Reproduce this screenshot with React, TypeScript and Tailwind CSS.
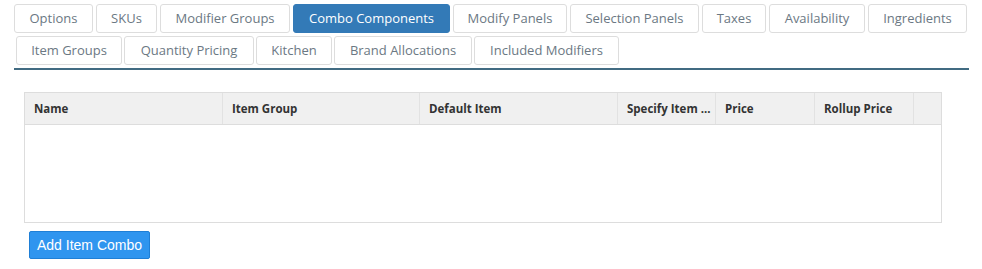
import React from 'react'

const row1 = [
  { label: 'Options', w: 'w-[79px]' },
  { label: 'SKUs', w: 'w-[61px]' },
  { label: 'Modifier Groups', w: 'w-[130px]' },
  { label: 'Combo Components', w: 'w-[157px]', active: true },
  { label: 'Modify Panels', w: 'w-[114px]' },
  { label: 'Selection Panels', w: 'w-[129px]' },
  { label: 'Taxes', w: 'w-[64px]' },
  { label: 'Availability', w: 'w-[96px]' },
  { label: 'Ingredients', w: 'w-[99px]' },
]

const row2 = [
  { label: 'Item Groups', w: 'w-[106px]' },
  { label: 'Quantity Pricing', w: 'w-[130px]' },
  { label: 'Kitchen', w: 'w-[76px]' },
  { label: 'Brand Allocations', w: 'w-[138px]' },
  { label: 'Included Modifiers', w: 'w-[145px]' },
]

const columns = [
  { label: 'Name', w: 'w-[198px]' },
  { label: 'Item Group', w: 'w-[197px]' },
  { label: 'Default Item', w: 'w-[198px]' },
  { label: 'Specify Item ...', w: 'w-[98px]' },
  { label: 'Price', w: 'w-[99px]' },
  { label: 'Rollup Price', w: 'w-[99px]' },
]

type Tab = { label: string; w: string; active?: boolean }

function TabButton({ tab }: { tab: Tab }) {
  return (
    <div
      className={`${tab.w} h-[29px] flex items-center justify-center rounded-[3px] border text-[13px] ${
        tab.active
          ? 'bg-[#337ab7] border-[#337ab7] text-white'
          : 'bg-white border-[#dddddd] text-[#6b7883]'
      }`}
    >
      {tab.label}
    </div>
  )
}

export default function App() {
  return (
    <div className="w-[982px] h-[269px] bg-white pt-[4px] pl-[14px]" style={{ fontFamily: '"Open Sans", "Noto Sans", sans-serif' }}>
      <div className="w-[955px] border-b-2 border-[#416b82] pb-[3px]">
        <div className="flex gap-[3px]">
          {row1.map((t) => (
            <TabButton key={t.label} tab={t} />
          ))}
        </div>
        <div className="flex gap-[2px] mt-[3px] pl-[2px]">
          {row2.map((t) => (
            <TabButton key={t.label} tab={t} />
          ))}
        </div>
      </div>

      <div className="ml-[10px] mt-[22px] w-[918px] h-[131px] border border-[#dddddd] flex flex-col">
        <div className="h-[32px] bg-[#f0f0f0] border-b border-[#dddddd] flex">
          {columns.map((c) => (
            <div
              key={c.label}
              className={`${c.w} h-full flex items-center pl-[9px] border-r border-[#e2e2e2] text-[11.5px] font-bold text-[#333] whitespace-nowrap overflow-hidden`}
            >
              {c.label}
            </div>
          ))}
          <div className="flex-1" />
        </div>
        <div className="flex-1 bg-white" />
      </div>

      <button
        className="ml-[15px] mt-[8px] w-[121px] h-[28px] rounded-[2px] bg-[#2f95ef] border border-[#1f7fd6] text-white text-[14px]"
        style={{ fontFamily: '"Liberation Sans", Arial, sans-serif' }}
      >
        Add Item Combo
      </button>
    </div>
  )
}
